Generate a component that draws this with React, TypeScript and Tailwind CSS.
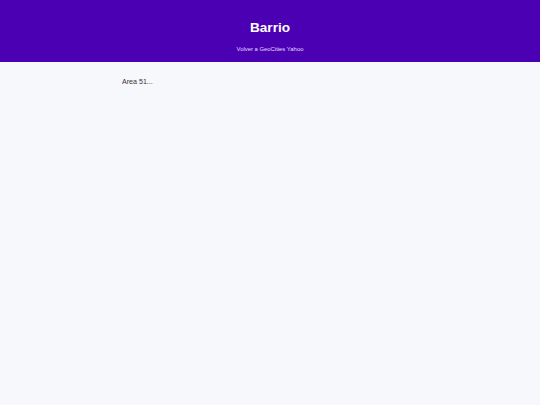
import React from 'react';

const App: React.FC = () => {
  return (
    <div className="min-h-screen bg-[#f7f8fc]" style={{ fontFamily: '"Liberation Sans", Arial, sans-serif' }}>
      <header className="bg-[#4b00b3] h-[62px] flex flex-col items-center">
        <h1 className="text-[13.6px] font-bold text-white mt-[19px] leading-[18px]">Barrio</h1>
        <a className="text-[5.9px] text-[#e6dcff] mt-[8px] leading-[8px]">Volver a GeoCities Yahoo</a>
      </header>
      <main className="w-[296px] mx-auto pt-[16px]">
        <p className="text-[7.1px] text-[#333] leading-[9px]">Area 51...</p>
      </main>
    </div>
  );
};

export default App;
